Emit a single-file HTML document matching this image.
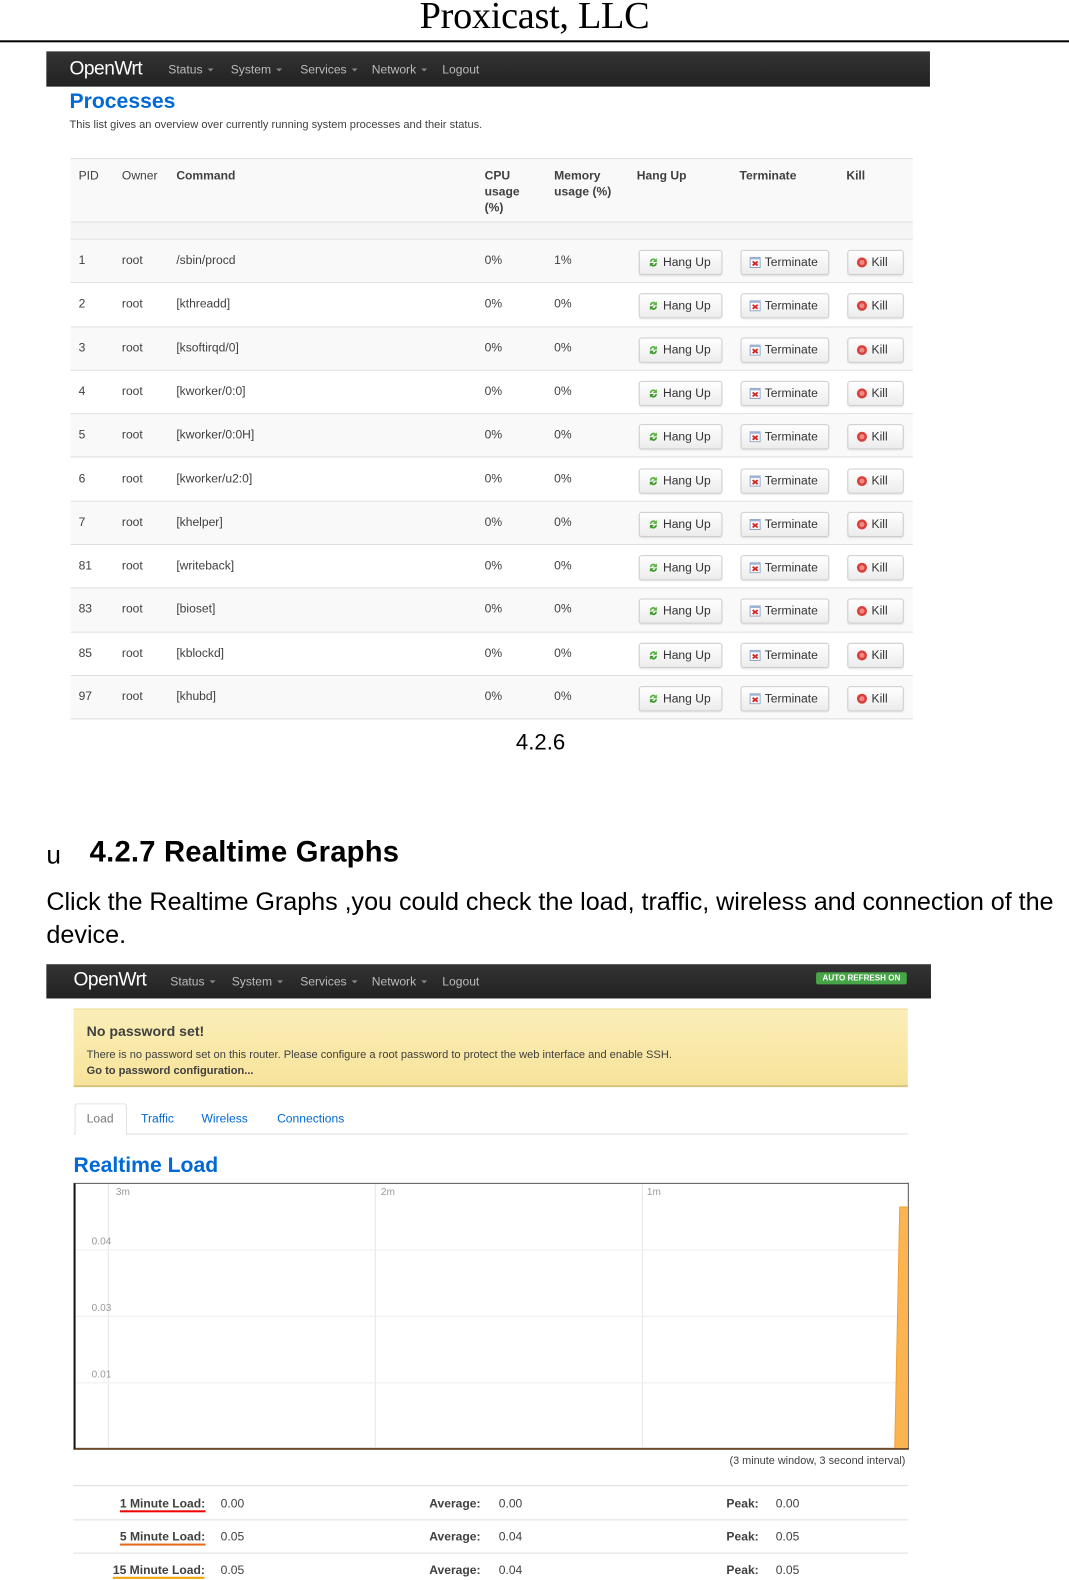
<!DOCTYPE html>
<html><head><meta charset="utf-8"><style>
*{margin:0;padding:0;box-sizing:border-box}
body{width:1069px;height:1580px;background:#fff;overflow:hidden;font-family:"Liberation Sans",sans-serif}
#w{position:absolute;left:0;top:0;width:1061px;height:1568px;transform:scale(1.00754);transform-origin:0 0}
.a{position:absolute;white-space:nowrap}
.nav{position:absolute;background:linear-gradient(#333,#222);color:#fff}
.nav .b{position:absolute;font-size:19px;top:7px;letter-spacing:-0.5px}
.nav .m{position:absolute;font-size:12px;color:#bbb;top:11px}
.car{display:inline-block;border-left:3px solid transparent;border-right:3px solid transparent;border-top:3px solid #888;vertical-align:middle;margin-left:5px}
.t{font-size:12px;color:#404040}
.th{font-size:12px;color:#404040;font-weight:bold;line-height:16px}
.btn{position:absolute;height:25px;border:1px solid #ccc;border-radius:3px;background:linear-gradient(#fff,#ececec);font-size:12px;color:#333;line-height:23px;padding-left:23px;box-shadow:0 1px 1px rgba(0,0,0,.08)}
.ic{position:absolute;left:8px;top:6px;width:11px;height:11px}
.gl{position:absolute;background:#e6e6e6}
.lbl{font-size:10px;color:#999;position:absolute}
.st{font-size:12px;color:#404040;position:absolute}
</style></head><body><div id="w">
<div class="a" style="left:0;width:1061px;text-align:center;top:-6px;font-family:'Liberation Serif',serif;font-size:38px;color:#000;letter-spacing:-0.3px">Proxicast, LLC</div>
<div class="a" style="left:0;top:40px;width:1061px;height:2px;background:#000"></div>

<div class="nav" style="left:46px;top:51px;width:877px;height:35px">
<div class="b" style="left:23px">OpenWrt</div>
<div class="m" style="left:121px">Status<span class="car"></span></div>
<div class="m" style="left:183px">System<span class="car"></span></div>
<div class="m" style="left:252px">Services<span class="car"></span></div>
<div class="m" style="left:323px">Network<span class="car"></span></div>
<div class="m" style="left:393px">Logout</div>
</div>
<div class="a" style="left:69px;top:89px;font-size:21px;font-weight:bold;color:#0069d6">Processes</div>
<div class="a t" style="left:69px;top:118px;font-size:11px">This list gives an overview over currently running system processes and their status.</div>

<div class="a" style="left:70px;top:157px;width:836px;height:555px;background:#fff"></div>
<div class="a" style="left:70px;top:157px;width:836px;height:64px;background:#f9f9f9;border-top:1px solid #ddd;border-bottom:1px solid #ddd"></div>
<div class="a" style="left:70px;top:221px;width:836px;height:17px;background:#f5f5f5;border-bottom:1px solid #ddd"></div>
<div class="a th" style="left:78px;top:166px;font-weight:normal">PID</div>
<div class="a th" style="left:121px;top:166px;font-weight:normal">Owner</div>
<div class="a th" style="left:175px;top:166px">Command</div>
<div class="a th" style="left:481px;top:166px">CPU<br>usage<br>(%)</div>
<div class="a th" style="left:550px;top:166px">Memory<br>usage (%)</div>
<div class="a th" style="left:632px;top:166px">Hang Up</div>
<div class="a th" style="left:734px;top:166px">Terminate</div>
<div class="a th" style="left:840px;top:166px">Kill</div>

<div id="rows"></div>
<script>
var d=[["1","/sbin/procd","1%"],["2","[kthreadd]","0%"],["3","[ksoftirqd/0]","0%"],["4","[kworker/0:0]","0%"],["5","[kworker/0:0H]","0%"],["6","[kworker/u2:0]","0%"],["7","[khelper]","0%"],["81","[writeback]","0%"],["83","[bioset]","0%"],["85","[kblockd]","0%"],["97","[khubd]","0%"]];
var h="";
var hang='<svg class="ic" viewBox="0 0 11 11"><path d="M2 5a3.5 3.5 0 0 1 6-2.5L9 1v4H5l1.5-1.5A2 2 0 0 0 3.5 5z" fill="#5bb342"/><path d="M9 6a3.5 3.5 0 0 1-6 2.5L2 10V6h4L4.5 7.5A2 2 0 0 0 7.5 6z" fill="#3f9a2c"/></svg>';
var term='<svg class="ic" viewBox="0 0 11 11"><rect x="0.5" y="0.5" width="10" height="10" fill="#fff" stroke="#8aa0c0"/><rect x="0.5" y="0.5" width="10" height="2" fill="#9db4d4"/><path d="M3 4.5l5 4M8 4.5l-5 4" stroke="#d22" stroke-width="1.8"/></svg>';
var kill='<svg class="ic" viewBox="0 0 11 11"><circle cx="5.5" cy="5.5" r="5" fill="#d9403a"/><circle cx="5.5" cy="5.5" r="2.5" fill="#f08a86"/></svg>';
for(var i=0;i<11;i++){var t=238+i*43.3;
h+='<div class="a" style="left:70px;top:'+t+'px;width:836px;height:43.3px;background:'+(i%2==0?'#f9f9f9':'#fff')+';border-bottom:1px solid #ddd"></div>';
var y=t+13;
h+='<div class="a t" style="left:78px;top:'+y+'px">'+d[i][0]+'</div><div class="a t" style="left:121px;top:'+y+'px">root</div><div class="a t" style="left:175px;top:'+y+'px">'+d[i][1]+'</div><div class="a t" style="left:481px;top:'+y+'px">0%</div><div class="a t" style="left:550px;top:'+y+'px">'+d[i][2]+'</div>';
var b=t+10;
h+='<div class="btn" style="left:634px;top:'+b+'px;width:83px">'+hang+'Hang Up</div>';
h+='<div class="btn" style="left:735px;top:'+b+'px;width:88px">'+term+'Terminate</div>';
h+='<div class="btn" style="left:841px;top:'+b+'px;width:56px">'+kill+'Kill</div>';}
document.getElementById('rows').outerHTML=h;
</script>

<div class="a" style="left:0;width:1073px;text-align:center;top:724px;font-size:22px;color:#000">4.2.6</div>
<div class="a" style="left:46px;top:833px;font-size:26px;color:#000">u</div>
<div class="a" style="left:89px;top:830px;font-size:29px;font-weight:bold;color:#000;letter-spacing:0.2px">4.2.7 Realtime Graphs</div>
<div class="a" style="left:46px;top:881px;font-size:25px;color:#000;letter-spacing:-0.05px">Click the Realtime Graphs ,you could check the load, traffic, wireless and connection of the</div>
<div class="a" style="left:46px;top:914px;font-size:25px;color:#000">device.</div>

<div class="nav" style="left:46px;top:957px;width:878px;height:34px">
<div class="b" style="left:27px;top:5px">OpenWrt</div>
<div class="m" style="left:123px;top:10px">Status<span class="car"></span></div>
<div class="m" style="left:184px;top:10px">System<span class="car"></span></div>
<div class="m" style="left:252px;top:10px">Services<span class="car"></span></div>
<div class="m" style="left:323px;top:10px">Network<span class="car"></span></div>
<div class="m" style="left:393px;top:10px">Logout</div>
<div style="position:absolute;left:764px;top:8px;width:90px;height:12px;background:#46a546;border-radius:2px;font-size:8px;font-weight:bold;color:#fff;line-height:12px;text-align:center">AUTO REFRESH ON</div>
</div>

<div class="a" style="left:73px;top:1001px;width:828px;height:78px;background:linear-gradient(#fbeeb8,#f7e39a);border-top:1px solid #e8d88a;border-bottom:2px solid #d6c27a"></div>
<div class="a" style="left:86px;top:1015px;font-size:14px;font-weight:bold;color:#404040">No password set!</div>
<div class="a" style="left:86px;top:1041px;font-size:11px;color:#404040">There is no password set on this router. Please configure a root password to protect the web interface and enable SSH.</div>
<div class="a" style="left:86px;top:1057px;font-size:11px;font-weight:bold;color:#404040">Go to password configuration...</div>

<div class="a" style="left:73px;top:1125px;width:828px;height:1px;background:#ddd"></div>
<div class="a" style="left:74px;top:1095px;width:52px;height:31px;background:#fff;border:1px solid #ddd;border-bottom:none;border-radius:3px 3px 0 0"></div>
<div class="a" style="left:86px;top:1103px;font-size:12px;color:#777">Load</div>
<div class="a" style="left:140px;top:1103px;font-size:12px;color:#0069d6">Traffic</div>
<div class="a" style="left:200px;top:1103px;font-size:12px;color:#0069d6">Wireless</div>
<div class="a" style="left:275px;top:1103px;font-size:12px;color:#0069d6">Connections</div>

<div class="a" style="left:73px;top:1145px;font-size:21px;font-weight:bold;color:#0069d6">Realtime Load</div>
<div class="a" style="left:73px;top:1174px;width:829px;height:265px;border:1px solid #555;border-left:2px solid #111;border-bottom:2px solid #6a4a2a;background:#fff;overflow:hidden">
<div class="gl" style="left:32px;top:0;width:1px;height:265px"></div>
<div class="gl" style="left:297px;top:0;width:1px;height:265px"></div>
<div class="gl" style="left:562px;top:0;width:1px;height:265px"></div>
<div class="gl" style="left:0;top:65px;width:829px;height:1px;background:#eee"></div>
<div class="gl" style="left:0;top:131px;width:829px;height:1px;background:#eee"></div>
<div class="gl" style="left:0;top:197px;width:829px;height:1px;background:#eee"></div>
<div class="lbl" style="left:40px;top:3px">3m</div>
<div class="lbl" style="left:303px;top:3px">2m</div>
<div class="lbl" style="left:567px;top:3px">1m</div>
<div class="lbl" style="left:16px;top:52px">0.04</div>
<div class="lbl" style="left:16px;top:118px">0.03</div>
<div class="lbl" style="left:16px;top:184px">0.01</div>
<svg style="position:absolute;left:0;top:0" width="829" height="265"><polygon points="818,23 829,23 829,265 813,265" fill="#fbb450" stroke="#f0a030"/></svg>
</div>
<div class="a" style="left:724px;top:1444px;font-size:10.8px;color:#404040">(3 minute window, 3 second interval)</div>

<div class="a" style="left:73px;top:1474px;width:828px;height:1px;background:#ddd"></div>
<div class="a" style="left:73px;top:1508px;width:828px;height:1px;background:#ddd"></div>
<div class="a" style="left:73px;top:1541px;width:828px;height:1px;background:#ddd"></div>
<div class="st" style="left:119px;top:1485px;border-bottom:2px solid #e00;font-weight:bold">1 Minute Load:</div>
<div class="st" style="left:119px;top:1518px;border-bottom:2px solid #e56a1c;font-weight:bold">5 Minute Load:</div>
<div class="st" style="left:112px;top:1551px;border-bottom:2px solid #f0a000;font-weight:bold">15 Minute Load:</div>
<div class="st" style="left:219px;top:1485px">0.00</div><div class="st" style="left:219px;top:1518px">0.05</div><div class="st" style="left:219px;top:1551px">0.05</div>
<div class="st" style="left:426px;top:1485px;font-weight:bold">Average:</div><div class="st" style="left:426px;top:1518px;font-weight:bold">Average:</div><div class="st" style="left:426px;top:1551px;font-weight:bold">Average:</div>
<div class="st" style="left:495px;top:1485px">0.00</div><div class="st" style="left:495px;top:1518px">0.04</div><div class="st" style="left:495px;top:1551px">0.04</div>
<div class="st" style="left:721px;top:1485px;font-weight:bold">Peak:</div><div class="st" style="left:721px;top:1518px;font-weight:bold">Peak:</div><div class="st" style="left:721px;top:1551px;font-weight:bold">Peak:</div>
<div class="st" style="left:770px;top:1485px">0.00</div><div class="st" style="left:770px;top:1518px">0.05</div><div class="st" style="left:770px;top:1551px">0.05</div>
</div></body></html>
